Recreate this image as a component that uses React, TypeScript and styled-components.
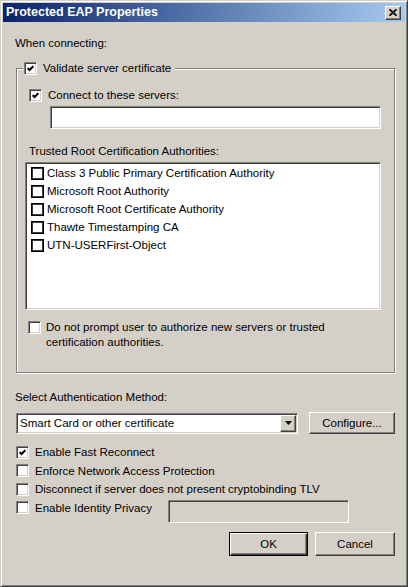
import styled, { createGlobalStyle, css } from 'styled-components';

const GlobalStyle = createGlobalStyle`
  html, body { margin: 0; padding: 0; background: #d4d0c8; }
  body {
    font-family: "Liberation Sans", Arial, sans-serif;
    font-size: 11.5px;
    color: #000;
  }
  * { box-sizing: border-box; }
`;

const sunken = css`
  border: 1px solid;
  border-color: #808080 #fff #fff #808080;
  box-shadow: inset 1px 1px 0 #404040, inset -1px -1px 0 #d4d0c8;
`;

const raised = css`
  border: 1px solid;
  border-color: #fff #404040 #404040 #fff;
  box-shadow: inset -1px -1px 0 #808080, inset 1px 1px 0 #d4d0c8;
`;

const Window = styled.div`
  width: 408px;
  height: 587px;
  display: flex;
  flex-direction: column;
  background: #d4d0c8;
  border: 1px solid;
  border-color: #d4d0c8 #404040 #404040 #d4d0c8;
  box-shadow: inset 1px 1px 0 #fff, inset -1px -1px 0 #808080;
  padding: 2px;
`;

const TitleBar = styled.div`
  height: 19px;
  display: flex;
  align-items: center;
  justify-content: space-between;
  padding: 0 4px 0 3px;
  background: linear-gradient(to right, #0a246a, #a6caf0);
`;

const Title = styled.span`
  color: #fff;
  font-weight: bold;
  font-size: 12.5px;
  line-height: 19px;
`;

const CloseButton = styled.span`
  ${raised};
  width: 16px;
  height: 14px;
  display: inline-flex;
  align-items: center;
  justify-content: center;
  background: #d4d0c8;
`;

const Body = styled.div`
  display: flex;
  flex-direction: column;
  padding: 14px 10px 0 13px;
`;

const Label = styled.div<{ $top?: number; $left?: number }>`
  line-height: 14px;
  margin-top: ${(p) => p.$top ?? 0}px;
  margin-left: ${(p) => p.$left ?? 0}px;
  white-space: nowrap;
`;

const GroupBox = styled.div`
  margin-top: 18px;
  display: flex;
  flex-direction: column;
  border: 1px solid #808080;
  box-shadow: inset 1px 1px 0 #fff, 1px 1px 0 #fff;
  padding: 0 13px 22px 8px;
`;

const Legend = styled.div`
  align-self: flex-start;
  margin: -8px 0 0 -2px;
  padding: 0 4px 0 1px;
  background: #d4d0c8;
  display: flex;
  align-items: center;
  gap: 6px;
  height: 14px;
`;

const CheckRow = styled.div<{ $top?: number; $left?: number; $height?: number }>`
  display: flex;
  align-items: center;
  gap: 6px;
  height: ${(p) => p.$height ?? 14}px;
  margin-top: ${(p) => p.$top ?? 0}px;
  margin-left: ${(p) => p.$left ?? 0}px;
  white-space: nowrap;
`;

const WrapRow = styled.div`
  display: flex;
  align-items: flex-start;
  gap: 5px;
  margin: 10px 0 0 3px;
  line-height: 15px;
`;

const Box = styled.span<{ $flat?: boolean; $top?: number }>`
  flex: none;
  width: 13px;
  height: 13px;
  display: inline-flex;
  align-items: center;
  justify-content: center;
  background: #fff;
  margin-top: ${(p) => p.$top ?? 0}px;
  ${(p) =>
    p.$flat
      ? css`
          border: 1px solid #000;
          box-shadow: inset 0 0 0 1px #3a3a3a;
        `
      : sunken};
`;

const TextField = styled.div<{ $disabled?: boolean }>`
  ${sunken};
  height: 23px;
  background: ${(p) => (p.$disabled ? '#d4d0c8' : '#fff')};
`;

const ServerField = styled(TextField)`
  margin: 4px 0 0 25px;
`;

const ListBox = styled.div`
  ${sunken};
  margin-top: 4px;
  height: 148px;
  background: #fff;
  padding: 1px 0 0 5px;
  display: flex;
  flex-direction: column;
`;

const ListItem = styled.div`
  height: 18px;
  display: flex;
  align-items: center;
  gap: 3px;
  white-space: nowrap;
`;

const ComboRow = styled.div`
  margin-top: 8px;
  display: flex;
  align-items: center;
  gap: 11px;
`;

const Combo = styled.div`
  ${sunken};
  width: 282px;
  height: 21px;
  background: #fff;
  display: flex;
  align-items: center;
  justify-content: space-between;
  padding: 0 1px 0 3px;
`;

const ComboArrow = styled.span`
  ${raised};
  width: 16px;
  height: 17px;
  background: #d4d0c8;
  display: inline-flex;
  align-items: center;
  justify-content: center;
`;

const Button = styled.button<{ $width: number; $height: number; $default?: boolean }>`
  width: ${(p) => p.$width}px;
  height: ${(p) => p.$height}px;
  padding: 0;
  font: inherit;
  color: #000;
  background: #d4d0c8;
  ${(p) =>
    p.$default
      ? css`
          border: 1px solid #000;
          box-shadow: inset 1px 1px 0 #fff, inset -1px -1px 0 #404040, inset -2px -2px 0 #808080;
        `
      : raised};
`;

const Options = styled.div`
  margin-top: 9px;
  display: flex;
  flex-direction: column;
`;

const IdentityRow = styled.div`
  display: grid;
  grid-template-columns: 152px 181px;
  align-items: start;
`;

const IdentityField = styled(TextField)`
  margin-top: 1px;
`;

const ButtonRow = styled.div`
  margin-top: 9px;
  display: flex;
  justify-content: flex-end;
  gap: 7px;
`;

const Tick = () => (
  <svg width="7" height="7" viewBox="0 0 7 7">
    <polyline points="0.6,3.2 2.5,5.1 6.4,1.2" fill="none" stroke="#000" strokeWidth="2.1" />
  </svg>
);

const Check = ({ checked, flat, top }: { checked?: boolean; flat?: boolean; top?: number }) => (
  <Box $flat={flat} $top={top}>{checked && <Tick />}</Box>
);

const authorities = [
  'Class 3 Public Primary Certification Authority',
  'Microsoft Root Authority',
  'Microsoft Root Certificate Authority',
  'Thawte Timestamping CA',
  'UTN-USERFirst-Object',
];

export default function App() {
  return (
    <>
      <GlobalStyle />
      <Window>
        <TitleBar>
          <Title>Protected EAP Properties</Title>
          <CloseButton>
            <svg width="8" height="7" viewBox="0 0 8 7">
              <path d="M0.5 0.3 L7.5 6.7 M7.5 0.3 L0.5 6.7" stroke="#000" strokeWidth="1.7" />
            </svg>
          </CloseButton>
        </TitleBar>

        <Body>
          <Label $left={-1}>When connecting:</Label>

          <GroupBox>
            <Legend>
              <Check checked />
              <span>Validate server certificate</span>
            </Legend>

            <CheckRow $top={13} $left={4}>
              <Check checked />
              <span>Connect to these servers:</span>
            </CheckRow>
            <ServerField />

            <Label $top={15} $left={4}>Trusted Root Certification Authorities:</Label>
            <ListBox>
              {authorities.map((name) => (
                <ListItem key={name}>
                  <Check flat />
                  <span>{name}</span>
                </ListItem>
              ))}
            </ListBox>

            <WrapRow>
              <Check top={1} />
              <span>
                Do not prompt user to authorize new servers or trusted
                <br />
                certification authorities.
              </span>
            </WrapRow>
          </GroupBox>

          <Label $top={17} $left={-1}>Select Authentication Method:</Label>
          <ComboRow>
            <Combo>
              <span>Smart Card or other certificate</span>
              <ComboArrow>
                <svg width="7" height="4" viewBox="0 0 7 4">
                  <path d="M0 0 H7 L3.5 4 Z" fill="#000" />
                </svg>
              </ComboArrow>
            </Combo>
            <Button $width={86} $height={22}>Configure...</Button>
          </ComboRow>

          <Options>
            <CheckRow $height={18.5}>
              <Check checked />
              <span>Enable Fast Reconnect</span>
            </CheckRow>
            <CheckRow $height={18.5}>
              <Check />
              <span>Enforce Network Access Protection</span>
            </CheckRow>
            <CheckRow $height={18.5}>
              <Check />
              <span>Disconnect if server does not present cryptobinding TLV</span>
            </CheckRow>
            <IdentityRow>
              <CheckRow $height={18.5}>
                <Check />
                <span>Enable Identity Privacy</span>
              </CheckRow>
              <IdentityField $disabled />
            </IdentityRow>
          </Options>

          <ButtonRow>
            <Button $width={79} $height={24} $default>OK</Button>
            <Button $width={80} $height={24}>Cancel</Button>
          </ButtonRow>
        </Body>
      </Window>
    </>
  );
}
